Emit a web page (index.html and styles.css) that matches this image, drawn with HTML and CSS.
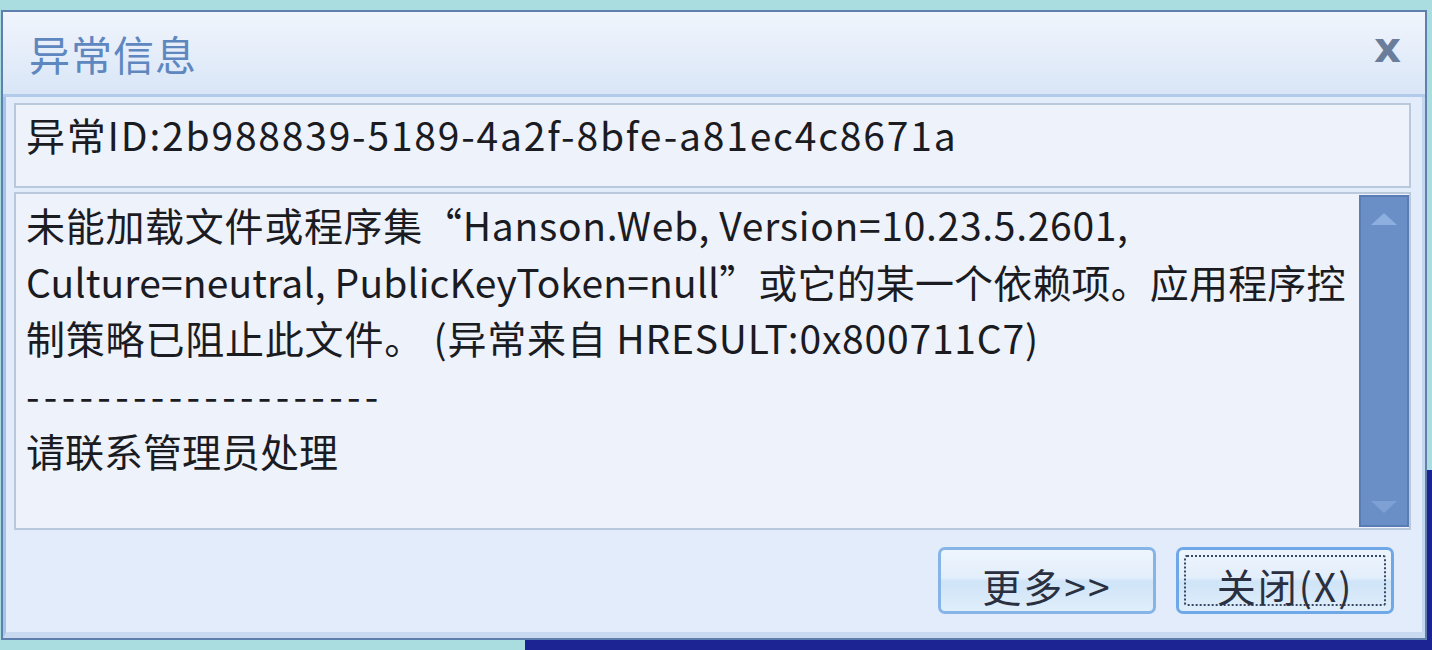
FILE: index.html
```html
<!DOCTYPE html>
<html lang="zh-CN">
<head>
<meta charset="utf-8">
<title>异常信息</title>
<link rel="stylesheet" href="styles.css">
</head>
<body>
<div class="desktop-shape"></div>
<div class="dialog">
  <div class="titlebar">
    <span class="title">异常信息</span>
    <span class="close-x">x</span>
  </div>
  <div class="content">
    <div class="id-box">异常ID:2b988839-5189-4a2f-8bfe-a81ec4c8671a</div>
    <div class="msg-box">
      <div class="msg-text"><span class="l1">未能加载文件或程序集“Hanson.Web, Version=10.23.5.2601,</span><br><span class="l2">Culture=neutral, PublicKeyToken=null”或它的某一个依赖项。应用程序控</span><br><span class="l3">制策略已阻止此文件。 (异常来自 HRESULT:0x800711C7)</span><br><span class="rule">--------------------</span><br>请联系管理员处理</div>
      <div class="scrollbar">
        <span class="arrow up"></span>
        <span class="arrow down"></span>
      </div>
    </div>
    <div class="buttons">
      <button class="btn"><span class="label">更多&gt;&gt;</span></button>
      <button class="btn btn-default"><span class="focus"><span class="label">关闭(X)</span></span></button>
    </div>
  </div>
</div>
</body>
</html>
```
FILE: styles.css
```css
html, body {
  margin: 0;
  padding: 0;
}
body {
  width: 1432px;
  height: 650px;
  overflow: hidden;
  background: #a9dde0;
  position: relative;
  font-family: "Noto Sans CJK SC", sans-serif;
}
.desktop-shape {
  position: absolute;
  left: 525px;
  top: 470px;
  right: 0;
  bottom: 0;
  background: #1c2392;
}
.dialog {
  position: relative;
  margin: 10px 0 0 1px;
  width: 1426px;
  height: 630px;
  box-sizing: border-box;
  border: 2px solid #5f80ad;
  background: #e2ecfa;
  display: flex;
  flex-direction: column;
}
.titlebar {
  height: 82px;
  flex: none;
  display: flex;
  align-items: center;
  justify-content: space-between;
  padding: 0 24px 0 26px;
  background: linear-gradient(#f0f5fc 0%, #e6eefa 45%, #d9e6f7 100%);
  border-bottom: 3px solid #b3cbea;
}
.title {
  font-size: 41px;
  color: #5f87bf;
  letter-spacing: 1px;
}
.close-x {
  font-family: "DejaVu Sans", sans-serif;
  font-weight: bold;
  font-size: 42px;
  color: #6a7e9c;
  line-height: 1;
  margin-top: -10px;
}
.content {
  flex: 1;
  display: flex;
  flex-direction: column;
  padding: 6px 11px 0 8px;
  border-left: 3px solid #a8c3e8;
  border-right: 3px solid #c5d8f0;
  border-bottom: 6px solid #c8d9f0;
}
.id-box {
  height: 85px;
  box-sizing: border-box;
  background: #eef2fb;
  border: 2px solid #bac8dc;
  padding: 1px 0 0 10px;
  font-size: 39px;
  line-height: 56px;
  letter-spacing: 1.8px;
  color: #1b1b22;
  white-space: nowrap;
}
.msg-box {
  margin-top: 4px;
  height: 338px;
  box-sizing: border-box;
  background: #eef2fb;
  border: 2px solid #bac8dc;
  display: flex;
}
.msg-text {
  flex: 1;
  padding: 2px 0 0 10px;
  font-size: 39px;
  line-height: 56.5px;
  color: #1b1b22;
  white-space: nowrap;
}
.l1 {
  letter-spacing: 0.7px;
}
.l2 {
  letter-spacing: 0.15px;
}
.l3 {
  letter-spacing: 0.8px;
}
.rule {
  letter-spacing: 4.3px;
}
.scrollbar {
  width: 46px;
  flex: none;
  margin: 1px 0 1px 0;
  background: #6a8fc6;
  border: 2px solid #5a7cb4;
  display: flex;
  flex-direction: column;
  justify-content: space-between;
  align-items: center;
  padding: 16px 0 12px;
}
.arrow {
  width: 0;
  height: 0;
  border-left: 13px solid transparent;
  border-right: 13px solid transparent;
}
.arrow.up {
  border-bottom: 12px solid #8dafdf;
}
.arrow.down {
  border-top: 12px solid #7ea0d4;
}
.buttons {
  display: flex;
  justify-content: flex-end;
  gap: 20px;
  padding: 17px 17px 0 0;
}
.btn {
  width: 218px;
  height: 67px;
  border: 3px solid #86b4e6;
  border-radius: 7px;
  background: linear-gradient(#eef5fd 0%, #e3eefb 45%, #cfe4f7 52%, #e0eefb 100%);
  font-family: "Noto Sans CJK SC", sans-serif;
  font-size: 39px;
  color: #2a3040;
  padding: 0;
  display: flex;
  align-items: center;
  justify-content: center;
}
.label {
  padding-top: 10px;
  letter-spacing: 2px;
  line-height: 1;
}
.btn-default {
  border-color: #6ea8e8;
  padding: 5px;
}
.focus {
  flex: 1;
  align-self: stretch;
  display: flex;
  align-items: center;
  justify-content: center;
  border: 2px dotted #3a4a66;
  border-radius: 3px;
}
```
